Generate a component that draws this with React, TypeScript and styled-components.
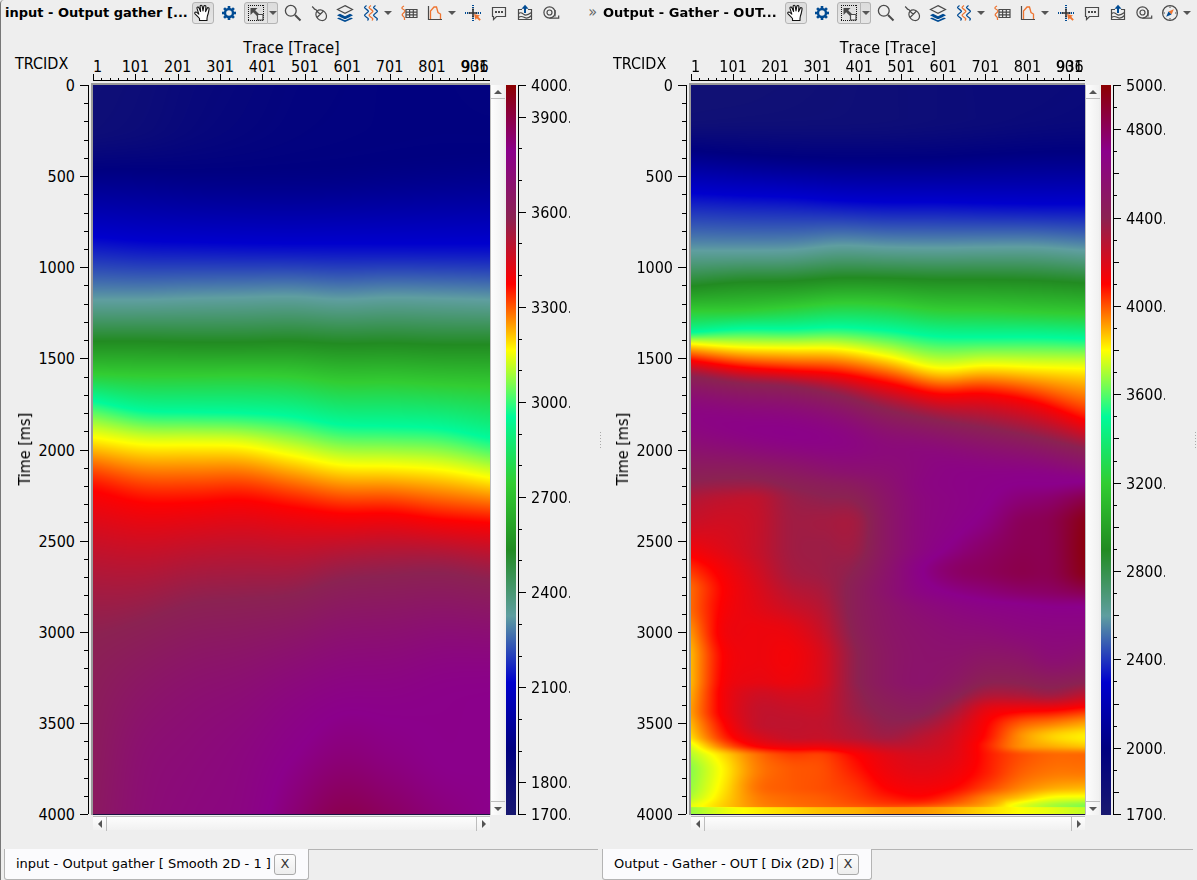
import React, { useLayoutEffect, useRef } from "react";
import styled, { createGlobalStyle, css } from "styled-components";

const LABEL_FONT = `"DejaVu Sans Condensed", "DejaVu Sans", sans-serif`;
const UI_FONT = `"DejaVu Sans", Verdana, sans-serif`;
const INK = "#4a4a4a";
const BLUE = "#004b93";
const ORANGE = "#ee7430";

const GlobalStyle = createGlobalStyle`
  *, *::before, *::after { box-sizing: border-box; }
  body { margin: 0; background: #eeeeee; color: #000; font-family: ${UI_FONT}; font-kerning: none; }
  button { font: inherit; color: inherit; }
`;

/* ---------- colour scale ---------- */

const PALETTE = [
  [25, 25, 112],
  [0, 0, 128],
  [0, 0, 205],
  [95, 158, 160],
  [34, 139, 34],
  [50, 205, 50],
  [0, 250, 154],
  [255, 255, 0],
  [255, 0, 0],
  [139, 34, 82],
  [139, 0, 139],
  [139, 0, 0],
];

const SCALE_GRADIENT = `linear-gradient(to top, ${PALETTE.map((c) => `rgb(${c.join(",")})`).join(", ")})`;

/* ---------- velocity sections ---------- */

/* A horizon: depth picks spread evenly over the traces, with the palette level on it. */
interface Horizon {
  at: number[];
  level: number[];
}

interface Section {
  depth: number;
  horizons: Horizon[];
}

const h = (shift: number, at: number[], level: number | number[]): Horizon => ({
  at: at.map((v) => v + shift),
  level: typeof level === "number" ? [level] : level,
});

const SMOOTH: Section = {
  depth: 1545,
  horizons: [
    h(0, [0], [0.4, 0.5, 0.65, 0.75, 0.85, 0.9, 0.95, 0.95, 0.9]),
    h(-11, [100, 100, 100, 100, 100, 95, 95, 90, 90], [0.45, 0.55, 0.7, 0.8, 0.88, 0.92, 0.95, 0.96, 0.95]),
    h(-11, [190, 190, 192, 190, 185, 178, 165, 155, 150], 1),
    h(-11, [332, 340, 343, 345, 346, 346, 346, 346, 346], 2),
    h(-11, [465, 465, 462, 460, 458, 464, 460, 462, 465], 3),
    h(-11, [553, 553, 555, 555, 553, 558, 557, 560, 560], 4),
    h(-11, [622, 626, 626, 625, 628, 640, 640, 645, 650], 5),
    h(-11, [680, 700, 703, 705, 712, 730, 733, 738, 758], 6),
    h(-11, [757, 772, 773, 776, 795, 815, 818, 825, 842], 7),
    h(-11, [870, 895, 895, 890, 905, 918, 918, 930, 938], 8),
    h(-11, [1180, 1145, 1110, 1100, 1090, 1060, 1050, 1045, 1060], 9),
    h(-11, [1320], [9.15, 9.4, 9.55, 9.65, 9.82, 9.95, 9.95, 9.98, 10]),
    h(-11, [1440], [9.2, 9.55, 9.68, 9.8, 10, 10.15, 10.08, 10, 10]),
    h(-11, [1556], [9.25, 9.6, 9.75, 9.85, 10.15, 10.42, 10.3, 10.12, 10]),
  ],
};

const DIX: Section = {
  depth: 2187,
  horizons: [
    h(0, [0], [0.3, 0.3, 0.35, 0.4, 0.45, 0.5, 0.55, 0.55, 0.6]),
    h(-15, [110], [0.35, 0.38, 0.4, 0.42, 0.45, 0.5, 0.55, 0.6, 0.65]),
    h(-15, [210, 220, 228, 232, 232, 230, 222, 215, 212], 1),
    h(-15, [338, 345, 350, 360, 365, 365, 368, 370, 370], 2),
    h(-15, [510, 510, 508, 495, 500, 502, 500, 500, 510], 3),
    h(-15, [617, 605, 602, 592, 593, 597, 597, 600, 608], 4),
    h(-15, [692, 690, 680, 668, 672, 687, 690, 695, 700], 5),
    h(-15, [755, 745, 745, 740, 750, 768, 770, 770, 775], 6),
    h(-15, [790, 800, 803, 805, 828, 862, 855, 860, 865], 7),
    h(765, [60, 80, 90, 100, 128, 160, 160, 185, 238], 8),
    h(765, [110, 130, 140, 165, 210, 240, 262, 290, 325], 9),
    h(765, [230, 260, 280, 300, 330, 350, 370, 375, 385], [9.85, 9.92, 9.96, 9.88, 9.7, 9.78, 9.8, 9.75, 9.6]),
    h(765, [390, 390, 390, 390, 390, 395, 405, 405, 410], [9.15, 9.15, 9.3, 9.5, 9.6, 9.85, 9.93, 9.95, 9.9]),
    h(765, [430], [8.95, 8.9, 8.9, 9.05, 9.15, 9.25, 9.5, 9.8, 9.9, 9.95, 10, 10, 10.05]),
    h(765, [480], [8.65, 8.55, 8.55, 8.85, 8.95, 9.0, 9.4, 9.75, 9.88, 9.98, 10.15, 10.25, 10.5]),
    h(765, [550], [8.45, 8.4, 8.5, 8.8, 8.8, 8.8, 9.35, 9.75, 9.92, 10.08, 10.35, 10.45, 10.85]),
    h(765, [620], [8.15, 8.3, 8.5, 8.8, 8.85, 8.85, 9.35, 9.78, 10.05, 10.25, 10.4, 10.45, 10.9]),
    h(765, [690], [7.8, 8.1, 8.4, 8.75, 8.85, 9.0, 9.45, 9.97, 10.25, 10.35, 10.45, 10.45, 10.85]),
    h(765, [750], [7.6, 8.02, 8.3, 8.6, 8.75, 9.1, 9.5, 9.87, 10.05, 10.15, 10.25, 10.3, 10.45]),
    h(765, [800], [7.6, 8.05, 8.25, 8.45, 8.65, 9.1, 9.4, 9.65, 9.8, 9.9, 9.95, 10, 10]),
    h(765, [870], [7.45, 8.1, 8.15, 8.2, 8.5, 9.05, 9.35, 9.5, 9.6, 9.65, 9.75, 9.8, 9.8]),
    h(765, [950], [7.3, 8.02, 8.15, 8.1, 8.35, 8.95, 9.3, 9.45, 9.45, 9.35, 9.4, 9.6, 9.5]),
    h(765, [1020], [7.3, 8.05, 8.2, 8.15, 8.35, 8.95, 9.3, 9.45, 9.3, 9.05, 9.05, 9.15, 9.05]),
    h(765, [1060], [7.35, 8.1, 8.4, 8.35, 8.45, 8.9, 9.2, 9.3, 9.1, 8.75, 8.75, 8.85, 8.6]),
    h(765, [1110], [7.4, 8.1, 8.5, 8.5, 8.5, 8.85, 9.05, 9.1, 8.75, 8.2, 8.05, 8, 7.85]),
    h(765, [1150], [7.3, 8, 8.5, 8.55, 8.55, 8.75, 8.95, 8.85, 8.5, 8.02, 7.65, 7.5, 7.35]),
    h(765, [1190], [7.15, 7.85, 8.3, 8.5, 8.5, 8.65, 8.8, 8.6, 8.35, 7.95, 7.45, 7.18, 7.05]),
    h(765, [1215], [6.9, 7.6, 8.05, 8.2, 8.2, 8.35, 8.55, 8.5, 8.3, 7.88, 7.45, 7.3, 7.2]),
    h(765, [1245], [6.7, 7.15, 7.55, 7.75, 7.75, 8, 8.25, 8.35, 8.25, 7.92, 7.7, 7.6, 7.6]),
    h(765, [1290], [6.55, 7.05, 7.5, 7.65, 7.7, 7.9, 8.15, 8.25, 8.15, 7.9, 7.65, 7.55, 7.55]),
    h(765, [1340], [6.6, 7.1, 7.55, 7.65, 7.7, 7.8, 8.02, 8.1, 8, 7.75, 7.5, 7.35, 7.3]),
    h(765, [1370], [6.7, 7.15, 7.5, 7.6, 7.65, 7.75, 7.9, 7.98, 7.8, 7.5, 7.25, 7, 6.95]),
    h(765, [1398], [6.9, 7.2, 7.45, 7.55, 7.6, 7.65, 7.7, 7.65, 7.5, 7.3, 6.9, 6.65, 6.5]),
    h(765, [1402], [6.6, 6.9, 7.05, 7.15, 7.25, 7.3, 7.4, 7.4, 7.3, 7.15, 7, 6.9, 6.75]),
    h(765, [1422], [6.6, 6.9, 7.05, 7.15, 7.25, 7.3, 7.4, 7.4, 7.3, 7.15, 7, 6.9, 6.75]),
  ],
};

/* Catmull-Rom through evenly spaced values, f from 0 to 1. */
function along(values: number[], f: number): number {
  const last = values.length - 1;
  if (last === 0) return values[0];
  const p = f * last;
  const i = Math.min(last - 1, Math.floor(p));
  const t = p - i;
  const b = values[i];
  const c = values[i + 1];
  const a = i > 0 ? values[i - 1] : 2 * b - c;
  const d = i + 2 <= last ? values[i + 2] : 2 * c - b;
  return b + 0.5 * t * (c - a + t * (2 * a - 5 * b + 4 * c - d + t * (3 * (b - c) + d - a)));
}

function paint(canvas: HTMLCanvasElement, section: Section) {
  const { width, height } = canvas;
  const ctx = canvas.getContext("2d");
  if (!ctx) return;
  const image = ctx.createImageData(width, height);
  for (let x = 0; x < width; x++) {
    const f = x / (width - 1);
    const y = section.horizons.map((k) => (along(k.at, f) / section.depth) * height);
    const u = section.horizons.map((k) => along(k.level, f));
    const n = y.length;
    const slope = y.slice(1).map((v, i) => (u[i + 1] - u[i]) / (v - y[i]));
    const m = y.map((_, i) => {
      if (i === 0) return slope[0];
      if (i === n - 1) return slope[n - 2];
      const a = slope[i - 1];
      const b = slope[i];
      return a * b <= 0 ? 0 : (2 * a * b) / (a + b);
    });
    let k = 0;
    for (let row = 0; row < height; row++) {
      while (k < n - 2 && row > y[k + 1]) k++;
      const span = y[k + 1] - y[k];
      const t = Math.max(0, Math.min(1, (row - y[k]) / span));
      const t2 = t * t;
      const t3 = t2 * t;
      const level =
        u[k] * (2 * t3 - 3 * t2 + 1) +
        m[k] * span * (t3 - 2 * t2 + t) +
        u[k + 1] * (3 * t2 - 2 * t3) +
        m[k + 1] * span * (t3 - t2);
      const c = Math.max(0, Math.min(10.999, level));
      const i = Math.floor(c);
      const o = (row * width + x) * 4;
      for (let j = 0; j < 3; j++) {
        image.data[o + j] = PALETTE[i][j] + (PALETTE[i + 1][j] - PALETTE[i][j]) * (c - i);
      }
      image.data[o + 3] = 255;
    }
  }
  ctx.putImageData(image, 0, 0);
}

/* ---------- toolbar icons ---------- */

const Glyph = styled.svg.attrs({ width: 22, height: 22, viewBox: "0 0 22 22", fill: "none", "aria-hidden": true })`
  display: block;
  flex: none;
`;

const HandIcon = () => (
  <Glyph stroke="#111" strokeWidth="1.1" strokeLinejoin="round" strokeLinecap="round">
    <path
      fill="#fff"
      d="M7.500 18.500v-2c-1.200-1.600-2.900-3.200-4.500-4.700-.9-1.300.8-2.300 1.800-1.400l2 1.700L5 6.400c-.4-1.500 1.400-2 1.900-.6l1.700 3.600-.5-5c0-1.600 1.900-1.600 2.100-.1l.8 4.700.8-4.600c.3-1.400 2.200-1.100 2.100.3l-.3 4.900 1.500-3.200c.5-1.200 2.200-.8 2 .5-.4 2.400-.7 4.900-1.700 7.100L15 16.500v2z"
    />
  </Glyph>
);

const GearIcon = () => (
  <Glyph stroke={BLUE}>
    <circle cx="11" cy="11" r="4" strokeWidth="2.400" />
    {[0, 45, 90, 135, 180, 225, 270, 315].map((a) => (
      <path key={a} d="M11 6.500V4" strokeWidth="2.600" transform={`rotate(${a} 11 11)`} />
    ))}
  </Glyph>
);

const SelectIcon = () => (
  <Glyph stroke={INK}>
    <path d="M3 3.500h16M3 18.500h16M3.500 3v16M18.500 3v16" stroke="#111" strokeDasharray="1 1" />
    <path d="M5.500 6h7l-2.300 2.300 4.300 4.200-2 2-4.300-4.200L5.500 13z" fill={INK} stroke="none" />
    <path d="M12.500 12.500h5.500v5.500h-5.500z" fill="#eee" strokeWidth="1.200" />
  </Glyph>
);

const ZoomIcon = () => (
  <Glyph stroke={INK}>
    <circle cx="8.800" cy="8.800" r="5.400" strokeWidth="1.300" />
    <path d="M13 13l5.500 5.500" strokeWidth="2" />
  </Glyph>
);

const MouseIcon = () => (
  <Glyph stroke={INK} strokeWidth="1.200">
    <ellipse cx="13.200" cy="13.200" rx="4.800" ry="5.800" transform="rotate(-45 13.200 13.200)" />
    <path d="M9 9.200C8 7.500 8.500 7.700 7 7.300 5.500 7 6 5.200 4 4.600M9 15.500l6.500-6.500M9 9.200l3.200 3" />
  </Glyph>
);

const LayersIcon = () => (
  <Glyph>
    <path d="M3 13.300l3-1.500 5 2.500 5-2.500 3 1.500-3 1.700 3 1.600-8 3.400-8-3.400 3-1.600z" fill={BLUE} />
    <path d="M4.500 14.800l6.500 3 6.500-3" stroke="#eee" strokeWidth="1" />
    <path d="M11 3.600l7.500 3.900-7.500 3.900-7.500-3.900z" fill="#eee" stroke={INK} strokeWidth="1.200" />
  </Glyph>
);

const WAVE = "c-2.600 1.800-2.600 2.100 0 3.900s2.600 2.100 0 3.900-2.600 2.100 0 3.900 2 1.600 1 3.300";

const WavesIcon = () => (
  <Glyph strokeWidth="1.300">
    <path d={`M6.500 3.500${WAVE}`} stroke={BLUE} />
    <path d={`M11 3.500${WAVE}`} stroke={ORANGE} />
    <path d={`M15.500 3.500${WAVE}`} stroke={BLUE} />
  </Glyph>
);

const TableIcon = () => (
  <Glyph>
    <path d="M6 4c-3 1.500-2.500 2.500-.5 3.500s2 2 0 3.500-1.500 2.500 0 3.500 1 2.500 1 3.500" stroke={ORANGE} strokeWidth="1.300" />
    <path d="M8 7.500h11v8H8zM8 10.200h11M8 12.900h11M11.600 7.500v8M15.300 7.500v8" stroke={INK} strokeWidth="1.200" />
  </Glyph>
);

const HistogramIcon = () => (
  <Glyph>
    <path d="M4.500 4v13.500H18" stroke={INK} strokeWidth="1.200" />
    <path d="M6.500 17V9l3.500-4h2.500l1.500 5.500 2.500 1.500V17" stroke={ORANGE} strokeWidth="1.300" />
  </Glyph>
);

const CrosshairIcon = () => (
  <Glyph>
    <path d="M11 3v5M11 14v5M3 11h5M14 11h6" stroke={BLUE} strokeWidth="2" strokeDasharray="1 1" />
    <path d="M11 6.500v9M6.500 11h9" stroke="#333" strokeWidth="1.600" />
    <path d="M12 12l6 1.500-1.800 1.300 2.600 2.700-1.300 1.300-2.700-2.600-1.300 1.800z" fill={ORANGE} />
  </Glyph>
);

const CommentIcon = () => (
  <Glyph stroke={INK} strokeWidth="1.200">
    <path d="M4.500 5.500h13v9h-9L5.500 17.500v-3h-1z" />
    <path d="M7 10h2M10 10h2M13 10h2" strokeWidth="2" />
  </Glyph>
);

const ExportIcon = () => (
  <Glyph stroke={INK} strokeWidth="1.200">
    <path d="M8 7.500H4.500v10h13v-10H14" />
    <path d="M4.500 12c2-2.500 3.500-1 5.500.5s4 .5 7.500-2M4.500 15.500c2.500-2 4-1 6 0s4.500.5 7-2" />
    <path d="M11 11V6" stroke={BLUE} strokeWidth="2" />
    <path d="M7.500 6.800L11 2.800l3.500 4z" fill={BLUE} stroke="none" />
  </Glyph>
);

const TapeIcon = () => (
  <Glyph stroke={INK} strokeWidth="1.200">
    <circle cx="9.500" cy="10.500" r="5.600" />
    <circle cx="9.500" cy="10.500" r="2.500" />
    <path d="M9.500 16.100h9.200v-2.600M15 8v6.500" />
  </Glyph>
);

const CompassIcon = () => (
  <Glyph>
    <circle cx="11" cy="11" r="7.400" stroke={INK} strokeWidth="1.200" />
    <path d="M11 4.500v1.500M11 16v1.500M4.500 11H6M16 11h1.500" stroke={INK} />
    <path d="M14.800 7.200l-2.300 5.300-3-3z" fill={ORANGE} />
    <path d="M7.200 14.800l2.300-5.300 3 3z" fill={BLUE} />
  </Glyph>
);

/* ---------- toolbar ---------- */

const Toolbar = styled.header`
  display: flex;
  align-items: center;
  height: 26px;
`;

const Title = styled.h2`
  flex: 1;
  min-width: 0;
  margin: 0;
  padding-left: 1px;
  overflow: hidden;
  white-space: nowrap;
  font: bold 13px/20px ${UI_FONT};
`;

const Tools = styled.div`
  display: flex;
  flex: none;
  gap: 4px;
`;

const ToolGroup = styled.div`
  display: flex;
`;

const pressedLook = css`
  border: 1px solid #b4b4b4;
  background: linear-gradient(#dcdcdc, #e6e6e6);
`;

const ToolButton = styled.button<{ $pressed?: boolean; $split?: boolean }>`
  display: flex;
  align-items: center;
  justify-content: center;
  width: ${(p) => (p.$split ? 24 : 22)}px;
  height: 22px;
  padding: 0;
  border: 0;
  border-radius: ${(p) => (p.$split ? "3px 0 0 3px" : "3px")};
  background: none;
  ${(p) => p.$pressed && pressedLook}
`;

const MenuButton = styled.button<{ $pressed?: boolean }>`
  display: flex;
  align-items: center;
  justify-content: center;
  width: ${(p) => (p.$pressed ? 10 : 12)}px;
  height: 22px;
  padding: 0;
  border: 0;
  border-radius: 0 3px 3px 0;
  background: none;
  ${(p) => p.$pressed && pressedLook}
  ${(p) => p.$pressed && "border-left: 0;"}
`;

const Overflow = styled.button`
  width: 36px;
  padding: 0 1px 2px 0;
  border: 0;
  background: none;
  text-align: right;
  font: 16px/20px ${LABEL_FONT};
  color: #666;
`;

const Arrow = ({ d }: { d: string }) => (
  <svg width="8" height="8" viewBox="0 0 8 8" aria-hidden="true">
    <path d={d} fill="#555" />
  </svg>
);

const DOWN = "M0 2h8L4 6z";
const UP = "M0 6h8L4 2z";
const LEFT = "M6 0v8L2 4z";
const RIGHT = "M2 0v8l4-4z";

interface Tool {
  name: string;
  icon: React.ReactNode;
  pressed?: boolean;
  menu?: boolean;
}

const TOOLS: Tool[] = [
  { name: "Pan", icon: <HandIcon />, pressed: true },
  { name: "Settings", icon: <GearIcon /> },
  { name: "Select area", icon: <SelectIcon />, pressed: true, menu: true },
  { name: "Zoom", icon: <ZoomIcon /> },
  { name: "Mouse mode", icon: <MouseIcon /> },
  { name: "Layers", icon: <LayersIcon /> },
  { name: "Traces", icon: <WavesIcon />, menu: true },
  { name: "Trace table", icon: <TableIcon /> },
  { name: "Histogram", icon: <HistogramIcon />, menu: true },
  { name: "Crosshair", icon: <CrosshairIcon /> },
  { name: "Comment", icon: <CommentIcon /> },
  { name: "Export", icon: <ExportIcon /> },
  { name: "Measure", icon: <TapeIcon /> },
];

const COMPASS: Tool = { name: "Compass", icon: <CompassIcon />, menu: true };

/* ---------- plot ---------- */

const PlotGrid = styled.div`
  flex: 1;
  min-height: 0;
  display: grid;
  grid-template-columns: 87px minmax(0, 1fr) 108px;
  grid-template-rows: 57px minmax(0, 1fr) 15px;
`;

const Corner = styled.div`
  padding: 28px 0 0 11px;
  font: 16px/20px ${LABEL_FONT};
`;

const AxisSvg = styled.svg`
  display: block;
  width: 100%;
  height: 100%;
  overflow: visible;
  font: 16px ${LABEL_FONT};
  font-kerning: none;
  fill: #000;
  shape-rendering: crispEdges;
`;

const TopAxis = styled.div`
  padding-left: 2px;
`;

const TimeAxis = styled.div`
  display: grid;
  grid-template-columns: 38px minmax(0, 1fr);
  padding: 2px 0 1px;
`;

const TimeTitle = styled.div`
  justify-self: center;
  align-self: center;
  padding-right: 4px;
  writing-mode: vertical-rl;
  rotate: 180deg;
  font: 16px/20px ${LABEL_FONT};
  white-space: nowrap;
`;

const ImageFrame = styled.div`
  min-height: 0;
  border: solid #9a9a9a;
  border-width: 2px 0 0 2px;
`;

const Raster = styled.canvas`
  display: block;
  width: 100%;
  height: 100%;
  border-bottom: 1px solid #1c1440;
`;

const Side = styled.div`
  display: grid;
  grid-template-columns: 14px 10px 52px;
  column-gap: 2px;
  padding-top: 2px;
  min-height: 0;
`;

const ScrollY = styled.div`
  display: flex;
  flex-direction: column;
  justify-content: space-between;
  border-left: 1px solid #bdbdbd;
  background: linear-gradient(to right, #fdfdfd, #f1f1f1);
`;

const ScrollX = styled.div`
  grid-column: 2;
  display: flex;
  justify-content: space-between;
  margin: 1px 0 0 2px;
  border-top: 1px solid #bdbdbd;
  background: linear-gradient(#fdfdfd, #f1f1f1);
`;

const StepButton = styled.button<{ $edge: "top" | "right" | "bottom" | "left" }>`
  display: flex;
  align-items: center;
  justify-content: center;
  width: 14px;
  height: 14px;
  padding: 0;
  border: 0 solid #bdbdbd;
  border-${(p) => p.$edge}-width: 1px;
  background: none;
`;

const ScaleBar = styled.div`
  background: ${SCALE_GRADIENT};
`;

const ScaleAxis = styled.div`
  padding-bottom: 1px;
  clip-path: inset(-12px 0);
`;

const range = (from: number, to: number, step: number) =>
  Array.from({ length: Math.floor((to - from) / step) + 1 }, (_, i) => from + i * step);

const LAST_TRACE = 938;
const tracePos = (t: number) => `${((t - 1) / (LAST_TRACE - 1)) * 100}%`;

function TraceAxis() {
  const majors = range(1, 901, 100);
  return (
    <AxisSvg>
      <text x="50%" y="27" textAnchor="middle">
        Trace [Trace]
      </text>
      <rect x="0" y="54" width="100%" height="1" />
      {range(1, 921, 20).map((t) => (
        <rect key={t} x={tracePos(t)} y={(t - 1) % 100 ? 52 : 48} width="1" height={(t - 1) % 100 ? 2 : 6} />
      ))}
      {majors.map((t) => (
        <text key={t} x={tracePos(t)} y="46" textAnchor={t === 1 ? "start" : "middle"}>
          {t}
        </text>
      ))}
      <text x={tracePos(935)} y="46" textAnchor="end">
        936
      </text>
    </AxisSvg>
  );
}

function TimeScale() {
  return (
    <AxisSvg>
      <rect x="46" y="0" width="1" height="100%" />
      {range(0, 4000, 100).map((t) => {
        const major = t % 500 === 0;
        const y = `${t / 40}%`;
        return (
          <g key={t}>
            <rect x={major ? 38 : 42} y={y} width={major ? 8 : 4} height="1" />
            {major && (
              <text x="33" y={y} dy="6" textAnchor="end">
                {t}
              </text>
            )}
          </g>
        );
      })}
    </AxisSvg>
  );
}

interface ScaleRange {
  top: number;
  major: number;
  medium?: number;
}

const SCALE_BOTTOM = 1700;

function ColourScale({ top, major, medium }: ScaleRange) {
  return (
    <AxisSvg>
      <rect x="0" y="0" width="1" height="100%" />
      {range(SCALE_BOTTOM, top, 100).map((v) => {
        const labelled = v % major === 0 || v === top || v === SCALE_BOTTOM;
        const y = `${((top - v) / (top - SCALE_BOTTOM)) * 100}%`;
        const size = labelled ? 8 : medium && v % medium === 0 ? 6 : 4;
        return (
          <g key={v}>
            <rect x="0" y={y} width={size} height="1" />
            {labelled && (
              <text x="13" y={y} dy="6">
                {v}.
              </text>
            )}
          </g>
        );
      })}
    </AxisSvg>
  );
}

function SectionImage({ section, label }: { section: Section; label: string }) {
  const ref = useRef<HTMLCanvasElement>(null);
  useLayoutEffect(() => {
    if (ref.current) paint(ref.current, section);
  }, [section]);
  return <Raster ref={ref} width={397} height={729} role="img" aria-label={label} />;
}

/* ---------- tabs ---------- */

const TabStrip = styled.footer`
  display: flex;
  height: 31px;
  margin-top: 19px;
`;

const Tab = styled.div`
  display: flex;
  align-items: center;
  gap: 3px;
  height: 31px;
  padding: 0 12px 0 11px;
  border: 1px solid #b4b4b4;
  border-top: 0;
  border-radius: 0 0 3px 3px;
  background: #fbfbfd;
  font: 13px/20px ${UI_FONT};
  white-space: nowrap;
`;

const TabRule = styled.div`
  flex: 1;
  border-top: 1px solid #b4b4b4;
`;

const CloseButton = styled.button`
  width: 22px;
  height: 21px;
  padding: 0;
  border: 1px solid #aaa;
  border-radius: 3px;
  background: linear-gradient(#fdfdfd, #ededed);
  font: 13px/18px ${UI_FONT};
  color: #333;
`;

/* ---------- page ---------- */

const Page = styled.main`
  display: grid;
  grid-template-columns: minmax(0, 594fr) 4px minmax(0, 591fr) 4px;
  height: 100vh;
  min-height: 480px;
  padding-left: 3px;
  border-left: 1px solid #777;
  border-top-left-radius: 4px;
`;

const Panel = styled.section`
  display: flex;
  flex-direction: column;
  min-width: 0;
`;

const Splitter = styled.div`
  align-self: center;
  justify-self: center;
  width: 1px;
  height: 17px;
  background: repeating-linear-gradient(#aaa 0 1px, transparent 1px 3px);
`;

interface ViewProps {
  title: string;
  tab: string;
  section: Section;
  scale: ScaleRange;
  tools: Tool[];
  overflow?: boolean;
}

function View({ title, tab, section, scale, tools, overflow }: ViewProps) {
  return (
    <Panel>
      <Toolbar>
        <Title>{title}</Title>
        <Tools>
          {tools.map((t) => (
            <ToolGroup key={t.name}>
              <ToolButton type="button" aria-label={t.name} $pressed={t.pressed} $split={t.pressed && t.menu}>
                {t.icon}
              </ToolButton>
              {t.menu && (
                <MenuButton type="button" aria-label={`${t.name} menu`} $pressed={t.pressed}>
                  <Arrow d={DOWN} />
                </MenuButton>
              )}
            </ToolGroup>
          ))}
        </Tools>
        {overflow && <Overflow type="button">»</Overflow>}
      </Toolbar>
      <PlotGrid>
        <Corner>TRCIDX</Corner>
        <TopAxis>
          <TraceAxis />
        </TopAxis>
        <div />
        <TimeAxis>
          <TimeTitle>Time [ms]</TimeTitle>
          <TimeScale />
        </TimeAxis>
        <ImageFrame>
          <SectionImage section={section} label={tab} />
        </ImageFrame>
        <Side>
          <ScrollY>
            <StepButton type="button" aria-label="Scroll up" $edge="bottom">
              <Arrow d={UP} />
            </StepButton>
            <StepButton type="button" aria-label="Scroll down" $edge="top">
              <Arrow d={DOWN} />
            </StepButton>
          </ScrollY>
          <ScaleBar />
          <ScaleAxis>
            <ColourScale {...scale} />
          </ScaleAxis>
        </Side>
        <ScrollX>
          <StepButton type="button" aria-label="Scroll left" $edge="right">
            <Arrow d={LEFT} />
          </StepButton>
          <StepButton type="button" aria-label="Scroll right" $edge="left">
            <Arrow d={RIGHT} />
          </StepButton>
        </ScrollX>
      </PlotGrid>
      <TabStrip>
        <Tab>
          {tab}
          <CloseButton type="button" aria-label={`Close ${tab}`}>
            X
          </CloseButton>
        </Tab>
        <TabRule />
      </TabStrip>
    </Panel>
  );
}

export default function App() {
  return (
    <>
      <GlobalStyle />
      <Page>
        <View
          title="input - Output gather [..."
          tab="input - Output gather [ Smooth 2D - 1 ]"
          section={SMOOTH}
          scale={{ top: 4000, major: 300 }}
          tools={TOOLS}
          overflow
        />
        <Splitter />
        <View
          title="Output - Gather - OUT..."
          tab="Output - Gather - OUT [ Dix (2D) ]"
          section={DIX}
          scale={{ top: 5000, major: 400, medium: 200 }}
          tools={[...TOOLS, COMPASS]}
        />
        <Splitter />
      </Page>
    </>
  );
}
